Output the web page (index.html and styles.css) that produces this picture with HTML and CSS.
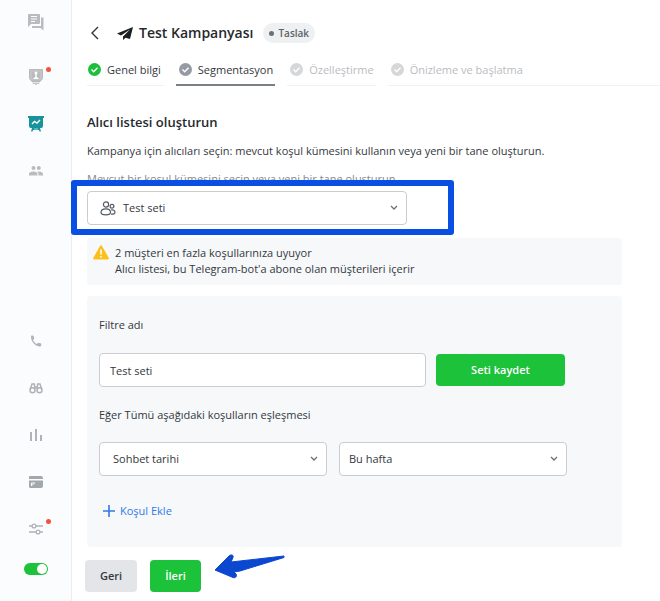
FILE: index.html
```html
<!DOCTYPE html>
<html lang="tr">
<head>
<meta charset="UTF-8">
<meta name="viewport" content="width=device-width, initial-scale=1">
<title>Test Kampanyası</title>
<link rel="stylesheet" href="styles.css">
</head>
<body>
<div class="app">

<nav class="sidebar">
<a class="nav-item nav-first" href="#" aria-label="Sohbetler">
<svg width="18" height="18" viewBox="0 0 18 18"><path fill="#b9bbbe" fill-rule="evenodd" d="M2 1h10a1 1 0 0 1 1 1v8a1 1 0 0 1-1 1H4l-3 3V2a1 1 0 0 1 1-1zm2 2v1h6V3zm0 2.500v1h6v-1zM4 8v1h4V8z"/><path fill="#b9bbbe" d="M14 4.500h2.500v13L13.500 15H5v-2h9z"/></svg>
</a>
<a class="nav-item" href="#" aria-label="Kişiler">
<svg width="16" height="18" viewBox="0 0 16 18"><path fill="#b9bbbe" d="M2 1h12a1 1 0 0 1 1 1v8a3 3 0 0 1-1 2l-2 2H4l-2-2a3 3 0 0 1-1-2V2a1 1 0 0 1 1-1z"/><path fill="#c7c9cb" d="M4 14.500h8l-1 1.500H9v1H7v-1H5z"/><path fill="none" stroke="#c9cbcd" d="M3 3h10v8H3z"/><circle cx="8" cy="5" r="1.500" fill="#fff"/><path fill="#fff" d="M7.300 6h1.400v3l1.800 1v1h-5v-1l1.800-1z"/></svg>
<span class="dot"></span>
</a>
<a class="nav-item" href="#" aria-label="Kampanyalar">
<svg width="18" height="18" viewBox="0 0 18 18"><path fill="#17939b" d="M1 1h16v2h-1v8a2 2 0 0 1-2 2h-1l1 3.500h-1.500l-.500-1.500H6l-.500 1.500H4L5 13H4a2 2 0 0 1-2-2V3H1z"/><path d="M5 9l2.500-2.500L10 8l3-3" fill="none" stroke="#fff" stroke-width="1.400"/><path d="M7 14h4" stroke="#9fd6d9" stroke-width="1"/></svg>
</a>
<a class="nav-item" href="#" aria-label="Ekip">
<svg width="14" height="12" viewBox="0 0 14 12"><g fill="#b9bbbe"><circle cx="4.500" cy="3" r="2"/><circle cx="9.800" cy="3" r="2"/><path d="M0 10.500V9c0-1.800 3-2.500 4.500-2.500S8.500 7.200 8.500 9v1.500z"/><path d="M9.500 10.500V9c0-1-.5-1.700-1.200-2.300 2-.5 5.700.3 5.700 2.300v1.500z"/></g></svg>
</a>

<a class="nav-item nav-bottom" href="#" aria-label="Aramalar">
<svg width="12" height="12" viewBox="0 0 12 12"><path fill="#afb2b6" d="M1 1.500C1 1 1.500.5 2 .5l1.500.2L4.300 3.500 3 5c.7 1.700 2 3 3.800 3.900l1.500-1.200 2.900.9v2c0 .5-.5.900-1 .9C5.500 11.500 1 7 1 1.500z"/></svg>
</a>
<a class="nav-item" href="#" aria-label="Arama">
<svg width="14" height="12" viewBox="0 0 14 12"><g fill="none" stroke="#afb2b6" stroke-width="1.500"><circle cx="3.500" cy="8.300" r="2.500"/><circle cx="10.500" cy="8.300" r="2.500"/><path d="M1.300 7L3 2h2.300l.7 5M12.700 7L11 2H8.700L8 7M5.500 5h3"/></g></svg>
</a>
<a class="nav-item" href="#" aria-label="Raporlar">
<svg width="14" height="14" viewBox="0 0 14 14"><path d="M2 4v9M7 1v12M12 7v6" stroke="#afb2b6" stroke-width="2"/></svg>
</a>
<a class="nav-item" href="#" aria-label="Ödeme">
<svg width="16" height="14" viewBox="0 0 16 14"><path fill="#a3a8ad" d="M2 1h11a2 2 0 0 1 2 2v1H1V2a1 1 0 0 1 1-1zM1 5.500h14V11a2 2 0 0 1-2 2H2.500A1.500 1.500 0 0 1 1 11.500z"/><path d="M3.500 11V8H7M4 10.500L6 8.500" fill="none" stroke="#fff"/></svg>
</a>
<a class="nav-item" href="#" aria-label="Ayarlar">
<svg width="14" height="14" viewBox="0 0 14 14"><g fill="none" stroke="#afb2b6" stroke-width="1.300"><circle cx="5" cy="4" r="1.900"/><circle cx="9" cy="10" r="1.900"/><path d="M0 4h3M7 4h7M0 10h7M11 10h3"/></g></svg>
<span class="dot"></span>
</a>
<input class="switch" type="checkbox" role="switch" aria-label="Çevrimiçi" checked>
</nav>

<main class="main">
<header class="title-bar">
<button class="back" type="button" aria-label="Geri">
<svg width="10" height="14" viewBox="0 0 10 14"><path d="M8 1L2 7l6 6" fill="none" stroke="#333" stroke-width="1.400"/></svg>
</button>
<svg class="plane" width="16" height="15" viewBox="0 0 16 15"><path fill="#1d1f22" d="M16 1L0 7.500l4 2L13 3.500 6 10.500V14l2.500-2.300L13 13z"/></svg>
<h1>Test Kampanyası</h1>
<span class="badge">Taslak</span>
</header>

<ol class="steps">
<li class="step done"><svg width="13" height="13" viewBox="0 0 13 13"><circle cx="6.500" cy="6.500" r="6.500"/><path d="M3.500 6.500l2.200 2.200 3.800-4"/></svg>Genel bilgi</li>
<li class="step current"><svg width="13" height="13" viewBox="0 0 13 13"><circle cx="6.500" cy="6.500" r="6.500"/><path d="M3.500 6.500l2.200 2.200 3.800-4"/></svg>Segmentasyon</li>
<li class="step"><svg width="13" height="13" viewBox="0 0 13 13"><circle cx="6.500" cy="6.500" r="6.500"/><path d="M3.500 6.500l2.200 2.200 3.800-4"/></svg>Özelleştirme</li>
<li class="step last"><svg width="13" height="13" viewBox="0 0 13 13"><circle cx="6.500" cy="6.500" r="6.500"/><path d="M3.500 6.500l2.200 2.200 3.800-4"/></svg>Önizleme ve başlatma</li>
</ol>

<form class="content">
<h2>Alıcı listesi oluşturun</h2>
<p class="intro">Kampanya için alıcıları seçin: mevcut koşul kümesini kullanın veya yeni bir tane oluşturun.</p>

<div class="set-field">
<label for="set">Mevcut bir koşul kümesini seçin veya yeni bir tane oluşturun</label>
<div class="select set-select">
<select id="set"><option>Test seti</option></select>
<svg class="people" width="16" height="15" viewBox="0 0 16 15"><g fill="none" stroke="#555b61" stroke-width="1.200"><circle cx="6" cy="3.500" r="2.600"/><path d="M1 11.500C1 9 3 7.800 5.800 7.800s4.700 1.200 4.700 3.700c0 1.600-1.500 2.300-4.700 2.300S1 13.100 1 11.500z"/><circle cx="12" cy="5.200" r="1.900"/><path d="M11 9c2.200-.6 4 .5 4 2.300 0 1.500-1.300 2-4 1.900"/></g></svg>
<svg class="chevron" width="8" height="6" viewBox="0 0 8 6"><path d="M1 1l3 3 3-3"/></svg>
</div>
<span class="highlight"></span>
</div>

<div class="notice">
<svg width="16" height="15" viewBox="0 0 16 15"><path fill="#fdbf1b" d="M7 1a1.200 1.200 0 0 1 2 0l6.500 11.500a1.200 1.200 0 0 1-1 2h-13a1.200 1.200 0 0 1-1-2z"/><path d="M8 4.500v5M8 11v1.600" stroke="#fff" stroke-width="1.600"/></svg>
<p>2 müşteri en fazla koşullarınıza uyuyor<br>Alıcı listesi, bu Telegram-bot'a abone olan müşterileri içerir</p>
</div>

<section class="panel">
<label for="name">Filtre adı</label>
<div class="row name-row">
<input class="text" id="name" type="text" value="Test seti">
<button class="btn green" type="button">Seti kaydet</button>
</div>
<p class="match">Eğer Tümü aşağıdaki koşulların eşleşmesi</p>
<div class="row">
<div class="select">
<select aria-label="Koşul"><option>Sohbet tarihi</option></select>
<svg class="chevron" width="8" height="6" viewBox="0 0 8 6"><path d="M1 1l3 3 3-3"/></svg>
</div>
<div class="select period">
<select aria-label="Dönem"><option>Bu hafta</option></select>
<svg class="chevron" width="8" height="6" viewBox="0 0 8 6"><path d="M1 1l3 3 3-3"/></svg>
</div>
</div>
<button class="add" type="button"><svg width="12" height="12" viewBox="0 0 12 12"><path d="M6 0v12M0 6h12" stroke="#2f7be8" stroke-width="1.600"/></svg>Koşul Ekle</button>
</section>

<div class="actions">
<button class="btn grey" type="button">Geri</button>
<button class="btn green" type="button">İleri</button>
<svg class="arrow" width="72" height="28" viewBox="0 0 72 28"><path fill="#0c47d0" stroke="#0c47d0" stroke-width="1" stroke-linejoin="round" d="M1 17L15 3c2-2 5-1 4 1.500L17 9 70 3v1.500L26 18l-6 1 2 2c1.500 2.500-1 4.500-3 3.500z"/></svg>
</div>
</form>
</main>

</div>
</body>
</html>
```
FILE: styles.css
```css
* {
box-sizing: border-box;
}
body {
margin: 0;
font-family: "Open Sans", "Noto Sans", sans-serif;
font-size: 11px;
line-height: 16px;
color: #33383d;
background: #fff;
}
h1, h2, p, ol {
margin: 0;
padding: 0;
}
button, input, select {
font: inherit;
color: inherit;
}
svg {
display: block;
flex: none;
}
.app {
display: flex;
min-height: 100vh;
}

/* sidebar */
.sidebar {
display: flex;
flex-direction: column;
align-items: center;
gap: 3px;
flex: none;
width: 72px;
padding-bottom: 27px;
background: #fafcfd;
border-right: 1px solid #eceeef;
}
.nav-item {
position: relative;
display: flex;
align-items: center;
justify-content: center;
width: 44px;
height: 44px;
}
.nav-first {
margin-bottom: 8px;
}
.nav-bottom {
margin-top: auto;
}
.dot {
position: absolute;
top: 12px;
right: 7px;
width: 5px;
height: 5px;
border-radius: 50%;
background: #f4513f;
}
.switch {
appearance: none;
width: 24px;
height: 12px;
margin: 9px 0 0;
padding: 1px;
border-radius: 6px;
background: #1bc23a;
}
.switch::before {
content: "";
display: block;
width: 10px;
height: 10px;
margin-left: auto;
border-radius: 50%;
background: #fff;
}

/* header */
.main {
flex: 1;
min-width: 0;
}
.title-bar {
display: flex;
align-items: center;
height: 46px;
padding: 20px 16px 0 18px;
}
.back {
padding: 0;
border: 0;
background: none;
}
.plane {
margin: 0 6px 0 17px;
}
h1 {
font-size: 14px;
line-height: 20px;
font-weight: 600;
color: #25292d;
}
.badge {
display: flex;
align-items: center;
gap: 4px;
height: 20px;
margin-left: 10px;
padding: 0 6px;
border-radius: 10px;
background: #eef0f2;
font-size: 10px;
font-weight: 600;
color: #5d6267;
}
.badge::before {
content: "";
width: 5px;
height: 5px;
border-radius: 50%;
background: #6c7175;
}
.steps {
display: flex;
gap: 12px;
padding: 14px 0 0 15px;
list-style: none;
white-space: nowrap;
}
.step {
display: flex;
align-items: center;
gap: 6px;
height: 26px;
padding: 0 2px 6px 3px;
border-bottom: 1px solid #f0f1f2;
color: #b9bcbf;
}
.step circle {
fill: #d5d7d9;
}
.step path {
fill: none;
stroke: #fff;
stroke-width: 1.4;
}
.step.done {
padding-right: 3px;
padding-left: 1px;
color: #33383d;
}
.step.done circle {
fill: #1bbf3a;
}
.step.current {
border-bottom-color: #7b8085;
color: #33383d;
box-shadow: inset 0 -1px #7b8085;
}
.step.current circle {
fill: #959aa3;
}
.step.last {
flex: 1;
}

/* form */
.content {
padding: 26px 38px 10px 15px;
}
h2 {
font-size: 13px;
line-height: 20px;
font-weight: 600;
color: #25292d;
}
.intro {
margin-top: 11px;
}
.set-field {
position: relative;
max-width: 320px;
margin: 12px 0 13px;
}
.set-field label {
display: block;
height: 20px;
color: #85898d;
white-space: nowrap;
}
.highlight {
position: absolute;
top: 9px;
right: -47px;
bottom: -10px;
left: -16px;
border: 6px solid #0a4fe3;
border-radius: 3px;
pointer-events: none;
}
.select {
display: grid;
align-items: center;
}
.select > * {
grid-area: 1 / 1;
}
.select svg {
pointer-events: none;
}
select, .text {
appearance: none;
width: 100%;
height: 34px;
padding: 0 13px;
border: 1px solid #c9cdd1;
border-radius: 4px;
background: #fff;
}
.text {
padding: 0 10px;
}
.set-select select {
padding-left: 35px;
}
.period select {
padding-left: 9px;
}
.people {
margin-left: 13px;
}
.chevron {
justify-self: end;
margin-right: 9px;
}
.chevron path {
fill: none;
stroke: #6b7075;
stroke-width: 1.3;
}
.notice {
display: flex;
gap: 6px;
padding: 7px 6px 8px;
border-radius: 4px;
background: #f6f8fa;
}
.panel {
margin-top: 11px;
padding: 21px 12px 28px;
border-radius: 4px;
background: #f6f8fa;
}
.panel label {
display: block;
}
.row {
display: grid;
grid-template-columns: 1fr 1fr;
align-items: center;
gap: 12px;
max-width: 468px;
}
.name-row {
grid-template-columns: 1fr 129px;
gap: 10px;
max-width: 466px;
margin: 20px 0;
}
.match {
margin-bottom: 19px;
}
.btn {
height: 32px;
padding: 0 15px;
border: 0;
border-radius: 4px;
font-weight: 600;
}
.green {
background: #1bc23a;
color: #fff;
}
.grey {
background: #e4e5e9;
}
.add {
display: flex;
align-items: center;
gap: 5px;
margin-top: 27px;
padding: 0 4px;
border: 0;
background: none;
font-weight: 500;
color: #2f7be8;
}
.actions {
display: flex;
gap: 13px;
margin: 13px 0 0 -2px;
}
.arrow {
margin-top: -7px;
}
```
